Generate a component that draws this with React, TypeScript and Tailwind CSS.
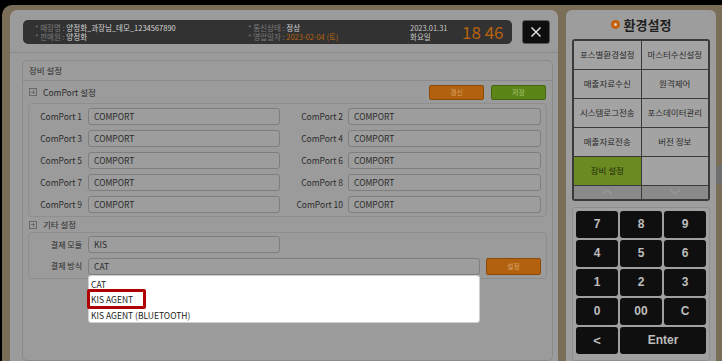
import React from "react";

const F = { fontFamily: '"Noto Sans CJK KR", "Noto Sans", sans-serif' };

function PortRow({ l1, l2 }: { l1: string; l2: string }) {
  return (
    <div className="flex items-center h-[22px]">
      <div className="w-[59px] text-right pr-[6px] text-[8.5px] text-[#2b2b2b] whitespace-nowrap">{l1}</div>
      <div className="w-[192px] h-[17px] border border-[#7e7e7e] rounded-[3px] bg-[#9d9d9d] flex items-center pl-[5px] text-[8.5px] text-[#2b2b2b]">COMPORT</div>
      <div className="w-[68px] text-right pr-[5px] text-[8.5px] text-[#2b2b2b] whitespace-nowrap">{l2}</div>
      <div className="w-[193px] h-[17px] border border-[#7e7e7e] rounded-[3px] bg-[#9d9d9d] flex items-center pl-[5px] text-[8.5px] text-[#2b2b2b]">COMPORT</div>
    </div>
  );
}

function PlusBox() {
  return (
    <div className="w-[8px] h-[8px] border border-[#6a6a6a] relative">
      <div className="absolute left-[1px] right-[1px] top-[2.5px] h-[1px] bg-[#6a6a6a]" />
      <div className="absolute top-[1px] bottom-[1px] left-[2.5px] w-[1px] bg-[#6a6a6a]" />
    </div>
  );
}

export default function App() {
  const menu = [
    ["포스별환경설정", "마스터수신설정"],
    ["매출자료수신", "원격제어"],
    ["시스템로그전송", "포스데이터관리"],
    ["매출자료전송", "버전 정보"],
  ];
  const keys = ["7", "8", "9", "4", "5", "6", "1", "2", "3", "0", "00", "C"];
  const kf = { fontFamily: '"Liberation Sans", sans-serif' };
  return (
    <div className="w-[722px] h-[361px] bg-black overflow-hidden pt-[5px] pl-[2px]" style={F}>
      <div className="h-[356px] bg-[#7b6e58] rounded-tl-[10px] flex pl-[8px] pt-[5px] relative">
        {/* left panel */}
        <div className="w-[548px] h-[351px] bg-[#9b9b9b] rounded-t-[7px] pt-[10px] flex flex-col">
          <div className="flex pl-[13px]">
            <div className="w-[489px] h-[24px] bg-[#323232] rounded-[5px] flex items-center pl-[12px]">
              <div className="flex flex-col text-[7.5px] leading-[9.5px] w-[213px] whitespace-nowrap">
                <div><span className="text-[#7a7a7a]">* 매장명 : </span><span className="text-[#d6d6d6]">양정화_과장님_데모_1234567890</span></div>
                <div><span className="text-[#7a7a7a]">* 판매원 : </span><span className="text-[#d6d6d6]">양정화</span></div>
              </div>
              <div className="flex flex-col text-[7.5px] leading-[9.5px] w-[162px] whitespace-nowrap">
                <div><span className="text-[#7a7a7a]">* 통신상태 : </span><span className="text-[#d6d6d6]">정상</span></div>
                <div><span className="text-[#7a7a7a]">* 영업일자 : </span><span className="text-[#b8620f]">2023-02-04 (토)</span></div>
              </div>
              <div className="flex flex-col text-[7.5px] leading-[9.5px] text-[#c8c8c8] w-[52px] whitespace-nowrap">
                <div>2023.01.31</div>
                <div>화요일</div>
              </div>
              <div className="text-[17px] leading-[20px] text-[#b8620f] whitespace-nowrap">18 46</div>
            </div>
            <div className="ml-[10px] w-[28px] h-[24px] bg-[#0e0e0e] border border-[#555] rounded-[3px] flex items-center justify-center">
              <svg width="12" height="12" viewBox="0 0 12 12"><path d="M1.5 1.5L10.5 10.5M10.5 1.5L1.5 10.5" stroke="#d8d8d8" strokeWidth="1.6" /></svg>
            </div>
          </div>
          <div className="mt-[8px] h-[1px] bg-[#8a8a8a]" />
          {/* section box */}
          <div className="mt-[7px] ml-[12px] w-[531px] flex-1 border border-[#8a8a8a] rounded-[5px] flex flex-col">
            <div className="h-[20px] flex items-center pl-[6px] text-[8.5px] text-[#2b2b2b] border-b border-[#8a8a8a]">장비 설정</div>
            <div className="flex items-center h-[22px] pl-[6px] pr-[6px]">
              <PlusBox />
              <div className="ml-[6px] text-[8.5px] text-[#2b2b2b] flex-1">ComPort 설정</div>
              <div className="w-[55px] h-[15px] bg-[#b2610f] border border-[#8c4a08] rounded-[2px] flex items-center justify-center text-[7px] text-[#d9a56a]">갱신</div>
              <div className="ml-[7px] w-[55px] h-[15px] bg-[#5c8517] border border-[#456510] rounded-[2px] flex items-center justify-center text-[7px] text-[#a9c27a]">저장</div>
            </div>
            <div className="ml-[5px] w-[519px] border border-[#8e8e8e] rounded-[4px] py-[1px]">
              <PortRow l1="ComPort 1" l2="ComPort 2" />
              <PortRow l1="ComPort 3" l2="ComPort 4" />
              <PortRow l1="ComPort 5" l2="ComPort 6" />
              <PortRow l1="ComPort 7" l2="ComPort 8" />
              <PortRow l1="ComPort 9" l2="ComPort 10" />
            </div>
            <div className="flex items-center h-[15px] pl-[6px]">
              <PlusBox />
              <div className="ml-[6px] text-[8.5px] text-[#2b2b2b]">기타 설정</div>
            </div>
            <div className="ml-[5px] w-[519px] border border-[#8e8e8e] rounded-[4px] py-[1px] relative">
              <div className="flex items-center h-[21px]">
                <div className="w-[59px] text-right pr-[6px] text-[8px] text-[#2b2b2b]">결제 모듈</div>
                <div className="w-[192px] h-[17px] border border-[#7e7e7e] rounded-[3px] bg-[#9d9d9d] flex items-center pl-[5px] text-[8.5px] text-[#2b2b2b]">KIS</div>
              </div>
              <div className="flex items-center h-[22px]">
                <div className="w-[59px] text-right pr-[6px] text-[8px] text-[#2b2b2b]">결제 방식</div>
                <div className="w-[392px] h-[17px] border border-[#7e7e7e] rounded-[3px] bg-[#9d9d9d] flex items-center pl-[5px] text-[8.5px] text-[#2b2b2b]">CAT</div>
                <div className="ml-[6px] w-[55px] h-[17px] bg-[#b2610f] border border-[#8c4a08] rounded-[2px] flex items-center justify-center text-[7px] text-[#d9a56a]">설정</div>
              </div>
              <div className="absolute left-[59px] top-[42px] w-[392px] h-[48px] bg-white rounded-[3px] border border-[#cfcfcf] flex flex-col pl-[2px] text-[8.5px] text-[#222] leading-[10px] z-10">
                <div className="h-[14px] flex items-center pt-[2px]">CAT</div>
                <div className="h-[17px] flex items-center relative">
                  <span>KIS AGENT</span>
                  <div className="absolute left-[-4px] top-[-1px] w-[59px] h-[20px] border-[3px] border-[#b00000] rounded-[2px]" />
                </div>
                <div className="h-[15px] flex items-center">KIS AGENT (BLUETOOTH)</div>
              </div>
            </div>
          </div>
        </div>
        {/* right panel */}
        <div className="ml-[8px] w-[150px] h-[351px] bg-[#9d9d9d] rounded-t-[6px] flex flex-col items-center pt-[3px]">
          <div className="flex items-center gap-[4px] h-[24px]">
            <div className="w-[9px] h-[9px] rounded-full bg-[#c4600c] flex items-center justify-center">
              <div className="w-[3px] h-[3px] rounded-full bg-[#e6d2b8]" />
            </div>
            <div className="text-[13px] font-bold text-[#1e1e1e]">환경설정</div>
          </div>
          <div className="mt-[2px] w-[138px] border-[2px] border-[#3a3a3a] rounded-[3px] bg-[#3a3a3a] grid grid-cols-2 gap-[1px]">
            {menu.flat().map((m) => (
              <div key={m} className="h-[28px] bg-[#a3a3a3] flex items-center justify-center text-[8.5px] text-[#2a2a2a] whitespace-nowrap">{m}</div>
            ))}
            <div className="h-[28px] bg-[#6b8a22] flex items-center justify-center text-[8.5px] text-[#1f2a0a]">장비 설정</div>
            <div className="h-[28px] bg-[#a3a3a3]" />
            <div className="h-[13px] bg-[#8a8a8a] flex items-center justify-center">
              <svg width="12" height="6" viewBox="0 0 12 6"><path d="M1 5.5L6 1L11 5.5" stroke="#9e9e9e" strokeWidth="1" fill="none" /></svg>
            </div>
            <div className="h-[13px] bg-[#8a8a8a] flex items-center justify-center">
              <svg width="12" height="6" viewBox="0 0 12 6"><path d="M1 0.5L6 5L11 0.5" stroke="#9e9e9e" strokeWidth="1" fill="none" /></svg>
            </div>
          </div>
          <div className="mt-[6px] w-[138px] h-[155px] border border-[#8e8e8e] rounded-[3px] bg-[#a0a0a0] px-[3px] pt-[3px] grid grid-cols-3 gap-[2px] content-start">
            {keys.map((k) => (
              <div key={k} className="h-[27px] bg-[#0f0f0f] rounded-[3px] flex items-center justify-center text-[12px] font-bold text-[#bdbdbd]" style={kf}>{k}</div>
            ))}
            <div className="h-[27px] bg-[#0f0f0f] rounded-[3px] flex items-center justify-center text-[13px] font-bold text-[#bdbdbd]" style={kf}>&lt;</div>
            <div className="col-span-2 h-[27px] bg-[#0f0f0f] rounded-[3px] flex items-center justify-center text-[12px] font-bold text-[#bdbdbd]" style={kf}>Enter</div>
          </div>
        </div>
        <div className="absolute right-[-4px] top-[160px] w-[10px] h-[20px] rounded-full bg-[#6f6f6f]" />
      </div>
    </div>
  );
}
